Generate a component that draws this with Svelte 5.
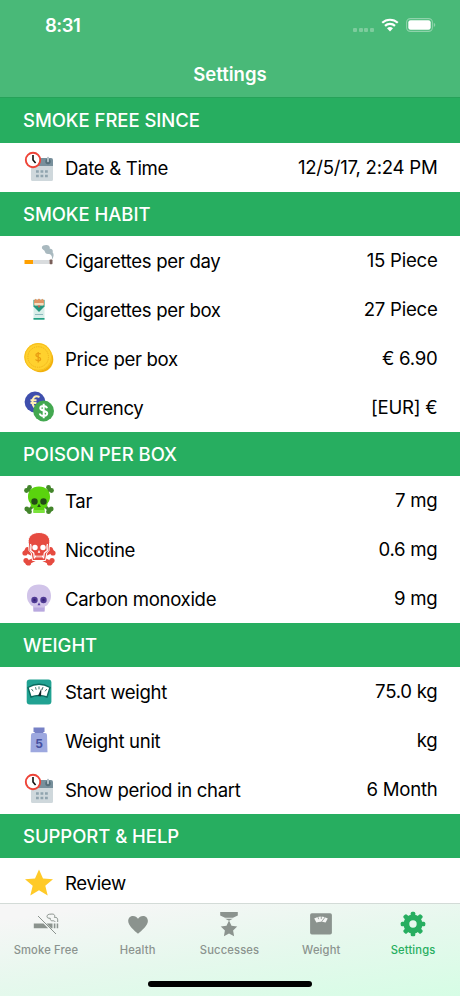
<script lang="ts">
    let active = $state("Settings");

    const sections = [
        {
            title: "SMOKE FREE SINCE",
            rows: [{ icon: "calendar", label: "Date & Time", value: "12/5/17, 2:24 PM" }],
        },
        {
            title: "SMOKE HABIT",
            rows: [
                { icon: "cigarette", label: "Cigarettes per day", value: "15 Piece" },
                { icon: "box", label: "Cigarettes per box", value: "27 Piece" },
                { icon: "coin", label: "Price per box", value: "€ 6.90" },
                { icon: "currency", label: "Currency", value: "[EUR] €" },
            ],
        },
        {
            title: "POISON PER BOX",
            rows: [
                { icon: "tar", label: "Tar", value: "7 mg" },
                { icon: "nicotine", label: "Nicotine", value: "0.6 mg" },
                { icon: "carbon", label: "Carbon monoxide", value: "9 mg" },
            ],
        },
        {
            title: "WEIGHT",
            rows: [
                { icon: "scale", label: "Start weight", value: "75.0 kg" },
                { icon: "unit", label: "Weight unit", value: "kg" },
                { icon: "calendar", label: "Show period in chart", value: "6 Month" },
            ],
        },
        {
            title: "SUPPORT & HELP",
            rows: [{ icon: "star", label: "Review", value: "" }],
        },
    ];

    const tabs = ["Smoke Free", "Health", "Successes", "Weight", "Settings"];
    const teeth = [0, 45, 90, 135, 180, 225, 270, 315];
</script>

{#snippet rowIcon(name: string)}
    <svg class="icon" viewBox="0 0 34 34" aria-hidden="true">
        {#if name === "calendar"}
            <path d="M9 11h22v18.500a1.500 1.500 0 0 1-1.500 1.500h-19A1.500 1.500 0 0 1 9 29.500z" fill="#cfd8dc" />
            <path d="M9 15.500V10a2 2 0 0 1 2-2h18a2 2 0 0 1 2 2v6H9z" fill="#78909c" />
            <circle cx="26" cy="11.500" r="2.700" fill="#546e7a" />
            <path d="M26 7.800v3.400" stroke="#b0bec5" stroke-width="2" stroke-linecap="round" />
            <path d="M14 21.500h2.800m1.700 0h2.800m1.700 0h2.800M14 26h2.800m1.700 0h2.800m1.700 0h2.800" stroke="#90a4ae" stroke-width="2.600" />
            <circle cx="11" cy="10" r="7.200" fill="#fff" stroke="#ee4438" stroke-width="1.900" />
            <path d="M11 5v5l2.600 3" fill="none" stroke="#111" stroke-width="1.600" />
        {:else if name === "cigarette"}
            <path d="M29.500 16c1.500-4-.5-6-3.500-6-3.500 0-2.500-3.300-4.500-4-3-1.700-1.400-5.200 1.500-4.700 2.500-1 5.500.5 4.700 3.500 2.300-.5 3.800 1.500 2.800 3.500 2 1.700 1 5.500-1 7.700z" fill="#a9b9bf" />
            <path d="M10 16h17v4H10z" fill="#d9dcde" />
            <path d="M2.500 16h8.500v4H2.500z" fill="#ffa000" />
            <rect x="27.500" y="15.500" width="3" height="4.800" rx=".8" fill="#795f59" />
        {:else if name === "box"}
            <path d="M11.500 7h11v20.500h-11z" fill="#d9eee9" />
            <path d="M11.500 8h11v6.500L17 20l-5.500-5.500z" fill="#24977f" />
            <path d="M12 8.500 13.500 6.800l1.700 1.300L17 6.600l1.800 1.500 1.700-1.300L22 8.500V13H12z" fill="#df9465" />
            <path d="M12.500 11h9v2.600h-9z" fill="#f3dfc2" />
            <path d="M15.500 13.600h3L17 16z" fill="#d65d45" />
            <path d="M13 22.500h8" stroke="#8db9bd" />
            <path d="M11.500 26h11v1.700h-11z" fill="#24a184" />
        {:else if name === "coin"}
            <circle cx="18.500" cy="18.500" r="12.800" fill="#f2b10c" />
            <circle cx="16.200" cy="16" r="13.900" fill="#ffd12e" />
            <circle cx="16.200" cy="16" r="13.400" fill="none" stroke="#f6bd1d" />
            <circle cx="16.200" cy="16" r="10.300" fill="none" stroke="#f0b31b" stroke-dasharray="1.300 1" />
            <path d="M18.600 13.200c-1-1.300-4.700-1.300-4.700.8 0 2.300 4.700 1.300 4.700 3.900 0 2.200-4.200 2.100-5.100.6M16.200 11v10.500" fill="none" stroke="#e99d11" stroke-width="1.300" />
        {:else if name === "currency"}
            <circle cx="13" cy="12" r="10.400" fill="#3f4fad" />
            <path d="M17.500 7c-5-2-7 1-7 5s2 7 6 5M8.500 10.300h6M8.500 13h6" fill="none" stroke="#fff0b5" stroke-width="2" />
            <circle cx="21.600" cy="21" r="10.400" fill="#43a850" />
            <path d="M25 18.300c-.7-3-6.700-3-6.700 0s6.900 2 6.900 5.300c0 3.200-7 3.200-7.400-.1M21.700 13.800v14.400" fill="none" stroke="#fff" stroke-width="2" />
        {:else if name === "tar"}
            <g stroke="#43852b" stroke-width="3" stroke-linecap="round">
                <path d="m6 6 22 22M28 6 6 28" />
            </g>
            <g fill="#43852b">
                <circle cx="4.500" cy="7.500" r="2.400" /><circle cx="7.500" cy="4.500" r="2.400" />
                <circle cx="29.500" cy="7.500" r="2.400" /><circle cx="26.500" cy="4.500" r="2.400" />
                <circle cx="4.800" cy="26" r="2.400" /><circle cx="7.500" cy="28.700" r="2.400" />
                <circle cx="29.200" cy="26" r="2.400" /><circle cx="26.500" cy="28.700" r="2.400" />
            </g>
            <path d="M17 3.500c7 0 11 4.500 11 10 0 4-1.500 5.500-2.500 7 0 3-1 4-3 4.300v5h-11v-5c-2-.3-3-1.300-3-4.300C7.500 19 6 17.500 6 13.500 6 8 10 3.500 17 3.500" fill="#5ad30e" />
            <path d="M11.500 27h11v3h-11z" fill="#7be43c" />
            <circle cx="12.500" cy="18.500" r="3.200" fill="#234c16" />
            <circle cx="21.500" cy="18.500" r="3.200" fill="#234c16" />
            <path d="m17 20.500-1.800 3.500h3.600z" fill="#234c16" />
        {:else if name === "nicotine"}
            <g stroke="#e64b40" stroke-width="3.800" stroke-linecap="round">
                <path d="m4 19 25 12M30 19 5 31" />
            </g>
            <g fill="#e64b40">
                <circle cx="3" cy="21" r="2.600" /><circle cx="5.500" cy="17.500" r="2.500" />
                <circle cx="31" cy="21" r="2.600" /><circle cx="28.500" cy="17.500" r="2.500" />
                <circle cx="4" cy="28.500" r="2.600" /><circle cx="6.500" cy="31" r="2.600" />
                <circle cx="30" cy="28.500" r="2.600" /><circle cx="27.500" cy="31" r="2.600" />
            </g>
            <path d="M17 .5c7 0 11.300 4.200 10.800 9.800-.3 3-1 5.200-.8 8.200l-2.200 2.500-1.300 7.500h-13L9.200 21 7 18.500c.2-3-.5-5.200-.8-8.200C5.700 4.700 10 .5 17 .5" fill="#e64b40" stroke="#fff" />
            <path d="M8.500 12c1 2 .3 4 .2 6.500l3 2.500.8 5.500M25.500 12c-1 2-.3 4-.2 6.500l-3 2.500-.8 5.500" fill="none" stroke="#fff" stroke-width="1.300" />
            <circle cx="13" cy="15.500" r="2.700" fill="#fff" />
            <circle cx="21" cy="15.500" r="2.700" fill="#fff" />
            <path d="m17 18-1.300 2.700h2.600zM13 23.500h8v2h-8z" fill="#fff" />
            <path d="M15 23v3M17 23v3M19 23v3" stroke="#e64b40" stroke-width=".8" />
        {:else if name === "carbon"}
            <path d="M17 3.500c7.500 0 12 4.500 12 11 0 5.500-2 7-3 8.500-1 2.300-2.500 1.600-3 2.500l-.5 5h-11l-.5-5c-.5-.9-2-.2-3-2.500-1-1.500-3-3-3-8.500 0-6.500 4.500-11 12-11" fill="#d1c4e9" />
            <path d="M11.500 26.500h11v4h-11z" fill="#b8a8df" />
            <circle cx="12.500" cy="19" r="3.200" fill="#4f3a94" />
            <circle cx="21.500" cy="19" r="3.200" fill="#4f3a94" />
            <circle cx="12.500" cy="19" r="1.200" fill="#362276" />
            <circle cx="21.500" cy="19" r="1.200" fill="#362276" />
            <path d="m17 21.500-1.500 2.800h3z" fill="#5a3ea5" />
        {:else if name === "scale"}
            <rect x="4.700" y="4.500" width="24.700" height="25" rx="3" fill="#21a292" />
            <path d="M6 12.500q11-6.500 22 0l-3 9.500q-8-3-16 0z" fill="#fff" stroke="#09695d" stroke-width="1.400" />
            <path d="m9.500 14 1.700 2.300M13.500 12.200l.7 2.600M17 11.500v2.800M21 12l-.8 2.800M24.800 14l-1.700 2.300" stroke="#45786f" stroke-width="1" />
            <path d="m19.500 13-3.500 8 3 .2z" fill="#11282b" />
        {:else if name === "unit"}
            <path d="M11.500 4.500h11v3.700l-2 2.300h-7l-2-2.300z" fill="#7781c6" />
            <path d="M9 12q0-2 2-2h12q2 0 2 2l.5 17.300h-17z" fill="#9da8df" />
            <text x="17" y="25" text-anchor="middle" class="unit-digit">5</text>
        {:else}
            <path d="m17 3.500 4 8.900 10 .8-7.700 6.600 2.400 9.700-8.700-5.300-8.700 5.300 2.400-9.700L3 13.200l10-.8z" fill="#ffca28" />
        {/if}
    </svg>
{/snippet}

{#snippet tabIcon(name: string)}
    <svg class="tab-icon" viewBox="0 0 28 28" aria-hidden="true">
        {#if name === "Smoke Free"}
            <path d="M1.800 13.500h9.700l4.700 4.700H1.800zM14.500 13.500h6v4.700h-1.300zM21.800 13.500h1.600v4.700h-1.600zM24.700 13.500h1.500v4.700h-1.500z" />
            <path d="M6 6 24 24" fill="none" stroke="currentColor" />
            <path d="M25.700 12V9.800c0-1.800-1-2.600-3.300-2.400 1-2.800-.6-3.500-3.300-3.300-2.500.1-4.100.6-4.100 2.300 0 1.600 1.300 1.900 3.300 1.900-.2 1.900.8 2.700 2.500 2.500 1.400-.1 2.100.3 2.100 1.200" fill="none" stroke="currentColor" />
        {:else if name === "Health"}
            <path d="M14 23.700C10.500 20.700 4.200 15.200 4.200 10.900 4.200 7.800 6.500 5.900 9 5.900c2.200 0 4 1 5 2.900 1-1.900 2.800-2.900 5-2.900 2.600 0 4.900 1.900 4.900 5 0 4.300-6.400 9.800-9.900 12.800" />
        {:else if name === "Successes"}
            <path d="M5.200 2h17.600v3.500L18 7.800h-8L5.200 5.500zM10.200 8.700h7.600L14 10.800z" />
            <path d="m14 10.500 2.500 5.300 5.700.8-4.100 4 1 5.700-5.100-2.700-5.100 2.700 1-5.700-4.100-4 5.700-.8z" />
        {:else if name === "Weight"}
            <rect x="3.100" y="3.300" width="21.800" height="21.200" rx="1.800" />
            <path d="M7.200 8.500q6.800-4 13.600 0l-2.200 4q-4.600-1.500-9.200 0z" fill="#f4f6f4" />
            <path d="m10.500 6 1.200 3.200M14.300 5.500V9M18.500 6.500 14.500 12" stroke="currentColor" stroke-width=".8" />
        {:else}
            {#each teeth as angle}
                <rect x="11.700" y="1.700" width="4.600" height="7" rx="1.500" transform="rotate({angle} 14 14)" />
            {/each}
            <circle cx="14" cy="14" r="6.600" fill="none" stroke="currentColor" stroke-width="5.800" />
        {/if}
    </svg>
{/snippet}

<div class="screen">
    <header>
        <div class="status">
            <span class="clock">8:31</span>
            <div class="indicators">
                <div class="signal"><i></i><i></i><i></i><i></i></div>
                <svg class="wifi" viewBox="0 0 18 14">
                    <path d="M1.200 4.800a11.500 11.500 0 0 1 15.600 0M4 7.900a7.300 7.300 0 0 1 10 0" fill="none" stroke="#fff" stroke-width="2.200" />
                    <path d="m9 13.500-3-3.200a4.500 4.500 0 0 1 6 0z" fill="#fff" />
                </svg>
                <svg class="battery" viewBox="0 0 30 14">
                    <rect x=".6" y=".6" width="25.800" height="12.800" rx="3.800" fill="none" stroke="#8fd3ab" stroke-width="1.100" />
                    <rect x="2.300" y="2.300" width="22.400" height="9.400" rx="2.200" fill="#fff" />
                    <path d="M27.800 4.800q3 2.200 0 4.400z" fill="#8fd3ab" />
                </svg>
            </div>
        </div>
        <h1>Settings</h1>
    </header>

    <main>
        {#each sections as section}
            <h2>{section.title}</h2>
            {#each section.rows as row}
                <div class="row">
                    {@render rowIcon(row.icon)}
                    <span class="label">{row.label}</span>
                    <span class="value">{row.value}</span>
                </div>
            {/each}
        {/each}
    </main>

    <nav>
        <div class="tabs">
            {#each tabs as tab}
                <button class:active={active === tab} onclick={() => (active = tab)}>
                    {@render tabIcon(tab)}
                    <span>{tab}</span>
                </button>
            {/each}
        </div>
        <div class="home"></div>
    </nav>
</div>

<style>
    :global(body) {
        margin: 0;
    }

    .screen {
        display: flex;
        flex-direction: column;
        width: 460px;
        height: 996px;
        overflow: hidden;
        background: #fff;
        color: #000;
        font-family: Inter, "Liberation Sans", sans-serif;
    }

    header {
        flex: none;
        box-sizing: border-box;
        height: 98.400px;
        background: #49b978;
        border-bottom: 1px solid #26a259;
        color: #fff;
    }

    .status {
        display: flex;
        justify-content: space-between;
        box-sizing: border-box;
        height: 49px;
        padding: 15px 24px 0 45px;
    }

    .clock {
        margin-top: -1px;
        font-size: 18.500px;
        font-weight: 600;
        line-height: 22px;
        letter-spacing: -0.500px;
    }

    .indicators {
        display: flex;
        align-items: center;
        height: 20px;
    }

    .signal {
        display: flex;
        gap: 1.700px;
        margin: 10px 7px 0 0;

        i {
            width: 4px;
            height: 4px;
            border-radius: 1px;
            background: #7dcc9d;
        }
    }

    .wifi {
        width: 18px;
        height: 14px;
        margin-right: 7px;
    }

    .battery {
        width: 30px;
        height: 14px;
    }

    h1 {
        margin: 0;
        font-size: 18.500px;
        font-weight: 600;
        line-height: 50px;
        letter-spacing: 0;
        text-align: center;
    }

    main {
        flex: 1;
        min-height: 0;
        overflow: hidden;
    }

    h2 {
        height: 44.400px;
        margin: 0;
        padding-left: 23px;
        background: #27ae60;
        color: #fff;
        font-size: 18.500px;
        font-weight: 500;
        line-height: 45px;
        letter-spacing: -0.050px;
    }

    .row {
        display: flex;
        align-items: center;
        height: 48.900px;
        padding: 0 22.500px 0 22px;
        font-size: 18.600px;
        letter-spacing: -0.330px;
    }

    .icon {
        width: 34px;
        height: 34px;
        margin-right: 9px;
    }

    .label {
        flex: 1;
        padding-top: 1px;
    }

    .value {
        margin-top: -1px;
        letter-spacing: -0.250px;
    }

    .unit-digit {
        fill: #4550a0;
        font-size: 12px;
        font-weight: 700;
    }

    nav {
        display: flex;
        flex: none;
        flex-direction: column;
        justify-content: space-between;
        align-items: center;
        box-sizing: border-box;
        height: 93px;
        padding-bottom: 9px;
        border-top: 1px solid #d3dbd7;
        background: linear-gradient(172deg, #f6f6f6 10%, #e6f8ed 52%, #d6fde5 100%);
    }

    .tabs {
        display: flex;
        width: 459px;
        margin-right: 1px;
    }

    button {
        display: flex;
        flex: 1 1 0;
        flex-direction: column;
        align-items: center;
        padding: 6px 0 0;
        border: 0;
        background: none;
        color: #8b938e;
        font-family: inherit;
        font-size: 11.200px;
        font-weight: 500;
        line-height: 15px;
        letter-spacing: 0.150px;
        white-space: nowrap;
    }

    button.active {
        color: #27ae60;
    }

    .tab-icon {
        width: 28px;
        height: 28px;
        margin-bottom: 5px;
        fill: currentColor;
    }

    .home {
        width: 164px;
        height: 6px;
        border-radius: 3px;
        background: #000;
    }
</style>
